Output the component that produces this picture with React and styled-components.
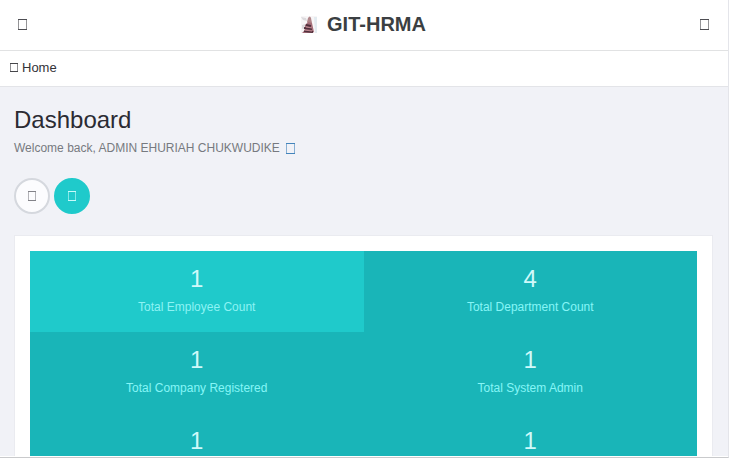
import React from "react";
import styled, { createGlobalStyle } from "styled-components";

const GlobalStyle = createGlobalStyle`
  *, *::before, *::after { box-sizing: border-box; }
  body {
    margin: 0;
    overflow: hidden;
    background: #f1f2f7;
    color: #32323a;
    font-family: "Liberation Sans", Arial, sans-serif;
    font-size: 12px;
    line-height: 16px;
  }
  h1, p, dl, dt, dd { margin: 0; font-weight: normal; }
  button { padding: 0; font: inherit; cursor: pointer; }
`;

const Page = styled.div`
  display: flex;
  flex-direction: column;
  height: 100vh;
  overflow: hidden;
  border-right: 1px solid #e4e5ea;
  border-bottom: 1px solid #c9cacc;
`;

const TopBar = styled.header`
  display: flex;
  flex: none;
  align-items: center;
  justify-content: space-between;
  height: 51px;
  padding: 0 16px 2px 15px;
  background: #fff;
  border-bottom: 1px solid #e1e2e3;
`;

const BarButton = styled.button`
  display: grid;
  place-items: center;
  width: 14px;
  height: 24px;
  border: 0;
  background: none;
  color: #3c3c42;
`;

const Brand = styled.a`
  display: flex;
  align-items: center;
  gap: 10px;
  color: #3b3f42;
  font-size: 20px;
  font-weight: bold;
  line-height: 24px;
  text-decoration: none;
`;

const Breadcrumb = styled.nav`
  display: flex;
  flex: none;
  align-items: center;
  height: 36px;
  padding: 0 10px 2px;
  background: #fff;
  border-bottom: 1px solid #e3e4e8;
`;

const CrumbLink = styled.a`
  display: flex;
  align-items: center;
  gap: 4px;
  color: #333338;
  font-size: 13px;
  text-decoration: none;
`;

const Content = styled.main`
  display: flex;
  flex: 1;
  flex-direction: column;
  min-height: 0;
  overflow: hidden;
  padding: 18px 15px 0 14px;
  border-bottom: 1px solid #fff;
`;

const Title = styled.h1`
  flex: none;
  color: #2b2b33;
  font-size: 24px;
  line-height: 30px;
`;

const Welcome = styled.p`
  display: flex;
  flex: none;
  align-items: center;
  gap: 6px;
  margin-top: 5px;
  color: #777a80;
`;

const ProfileLink = styled.a`
  display: flex;
  color: #337ab7;
`;

const Actions = styled.div`
  display: flex;
  flex: none;
  gap: 4px;
  margin: 22px 0 21px;
`;

const RoundButton = styled.button`
  display: grid;
  place-items: center;
  width: 36px;
  height: 36px;
  border: 2px solid ${(p) => (p.$active ? "#1fcacb" : "#d5d8de")};
  border-radius: 50%;
  background: ${(p) => (p.$active ? "#1fcacb" : "#fcfcfe")};
  color: ${(p) => (p.$active ? "#d9ffff" : "#77777d")};
`;

const Card = styled.section`
  flex: none;
  padding: 15px;
  background: #fff;
  border: 1px solid #eaebf0;
`;

const Stats = styled.div`
  display: grid;
  grid-template-columns: 1fr 1fr;
  background: #19b5b8;
`;

const Stat = styled.dl`
  display: flex;
  flex-direction: column-reverse;
  justify-content: flex-end;
  gap: 6px;
  height: 81px;
  padding-top: 14px;
  text-align: center;
  background: ${(p) => (p.$active ? "#1fcacb" : "#19b5b8")};
`;

const StatLabel = styled.dt`
  min-height: 16px;
  color: ${(p) => (p.$active ? "#8df3f4" : "#86f5f7")};
`;

const StatValue = styled.dd`
  color: #d0f9fa;
  font-size: 24px;
  line-height: 28px;
`;

function Box({ w, h }) {
  return (
    <svg width={w} height={h} viewBox={`0 0 ${w} ${h}`} aria-hidden="true">
      <rect x="0.5" y="0.5" width={w - 1} height={h - 1} fill="none" stroke="currentColor" strokeOpacity="0.55" />
      <path d={`M0 .5H${w}M0 ${h - 0.5}H${w}`} stroke="currentColor" strokeOpacity="0.8" />
    </svg>
  );
}

function Logo() {
  return (
    <svg width="16" height="20" viewBox="0 0 16 20" aria-hidden="true">
      <path d="M0 2h16v17H0z" fill="#f8f6f7" />
      <path d="M0 3l5 1 1 3-4-1zM1 11l4-1-2 4-2 1z" fill="#dcdadd" />
      <path d="M13 3h3v16h-2z" fill="#e3ebf0" />
      <path d="M7 4q2-3 3 0l1 5-3 1-2-2z" fill="#b0868a" />
      <path d="M4 11l3-3 4 1 2 9-2 1H1l3-3z" fill="#a66f7a" />
      <path d="M5 11l5 1M3 14l8 1M3 17l9 1" stroke="#51303c" strokeWidth="2" />
      <path d="M5 13l6 1M3 16l8 1" stroke="#bf8790" />
    </svg>
  );
}

const stats = [
  { label: "Total Employee Count", value: 1, active: true },
  { label: "Total Department Count", value: 4 },
  { label: "Total Company Registered", value: 1 },
  { label: "Total System Admin", value: 1 },
  { value: 1 },
  { value: 1 },
];

export default function App() {
  return (
    <>
      <GlobalStyle />
      <Page>
        <TopBar>
          <BarButton type="button" aria-label="Toggle menu"><Box w={9} h={11} /></BarButton>
          <Brand href="#"><Logo />GIT-HRMA</Brand>
          <BarButton type="button" aria-label="More options"><Box w={9} h={11} /></BarButton>
        </TopBar>
        <Breadcrumb aria-label="Breadcrumb">
          <CrumbLink href="#"><Box w={8} h={9} />Home</CrumbLink>
        </Breadcrumb>
        <Content>
          <Title>Dashboard</Title>
          <Welcome>
            Welcome back, ADMIN EHURIAH CHUKWUDIKE
            <ProfileLink href="#" aria-label="Profile"><Box w={9} h={11} /></ProfileLink>
          </Welcome>
          <Actions>
            <RoundButton type="button" aria-label="List"><Box w={8} h={10} /></RoundButton>
            <RoundButton type="button" aria-label="Overview" $active><Box w={8} h={10} /></RoundButton>
          </Actions>
          <Card>
            <Stats>
              {stats.map((s, i) => (
                <Stat key={i} $active={s.active}>
                  <StatLabel $active={s.active}>{s.label}</StatLabel>
                  <StatValue>{s.value}</StatValue>
                </Stat>
              ))}
            </Stats>
          </Card>
        </Content>
      </Page>
    </>
  );
}
